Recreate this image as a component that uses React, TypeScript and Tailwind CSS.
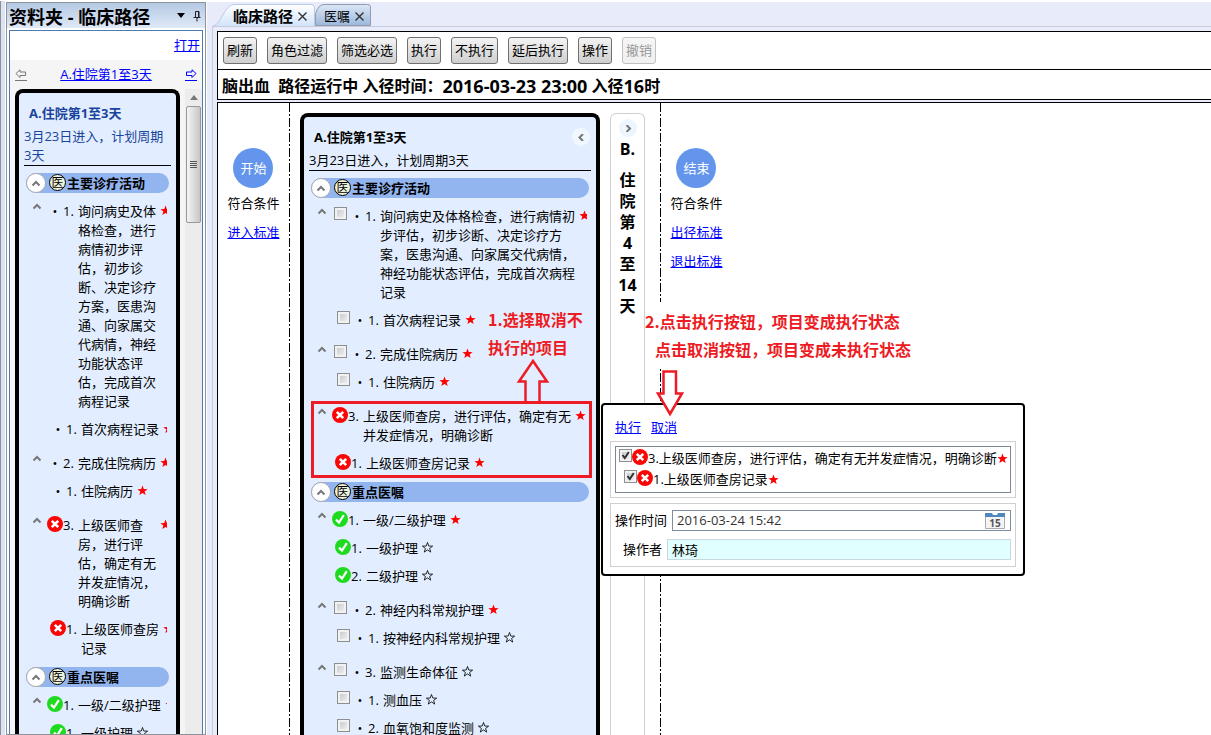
import { useId } from 'react';
import clsx from 'clsx';

type Mark = 'todo' | 'cancelled' | 'done';

interface Task {
  no: number;
  text: string;
  mark: Mark;
  required: boolean;
  oneLine?: boolean;
  children?: Task[];
}

const sections: { title: string; tasks: Task[] }[] = [
  {
    title: '主要诊疗活动',
    tasks: [
      {
        no: 1, mark: 'todo', required: true,
        text: '询问病史及体格检查，进行病情初步评估，初步诊断、决定诊疗方案，医患沟通、向家属交代病情，神经功能状态评估，完成首次病程记录',
        children: [{ no: 1, text: '首次病程记录', mark: 'todo', required: true }],
      },
      {
        no: 2, text: '完成住院病历', mark: 'todo', required: true,
        children: [{ no: 1, text: '住院病历', mark: 'todo', required: true }],
      },
      {
        no: 3, text: '上级医师查房，进行评估，确定有无并发症情况，明确诊断', mark: 'cancelled', required: true,
        children: [{ no: 1, text: '上级医师查房记录', mark: 'cancelled', required: true }],
      },
    ],
  },
  {
    title: '重点医嘱',
    tasks: [
      {
        no: 1, text: '一级/二级护理', mark: 'done', required: true, oneLine: true,
        children: [
          { no: 1, text: '一级护理', mark: 'done', required: false },
          { no: 2, text: '二级护理', mark: 'done', required: false },
        ],
      },
      {
        no: 2, text: '神经内科常规护理', mark: 'todo', required: true,
        children: [{ no: 1, text: '按神经内科常规护理', mark: 'todo', required: false }],
      },
      {
        no: 3, text: '监测生命体征', mark: 'todo', required: false,
        children: [
          { no: 1, text: '测血压', mark: 'todo', required: false },
          { no: 2, text: '血氧饱和度监测', mark: 'todo', required: false },
        ],
      },
    ],
  },
];

const toolbar = ['刷新', '角色过滤', '筛选必选', '执行', '不执行', '延后执行', '操作', '撤销'];

const STAR = 'M6 0.5 7.4 4.4 11.6 4.5 8.3 7 9.5 11 6 8.6 2.5 11 3.7 7 0.4 4.5 4.6 4.4Z';

function Star({ filled }: { filled: boolean }) {
  return (
    <svg viewBox="0 0 12 12" className="h-[11px] w-[11px] shrink-0">
      <path d={STAR} fill={filled ? '#ff0000' : 'none'} stroke={filled ? 'none' : '#000'} strokeWidth="0.9" />
    </svg>
  );
}

function Chevron({ className, d = 'M1.500 5.500 5 2 8.500 5.500' }: { className?: string; d?: string }) {
  return (
    <svg viewBox="0 0 10 7" className={clsx('h-[7px] w-[10px] shrink-0', className)}>
      <path d={d} fill="none" stroke="#777" strokeWidth="2" />
    </svg>
  );
}

function StatusIcon({ mark }: { mark: Mark }) {
  return (
    <svg viewBox="0 0 16 16" className="h-4 w-4 shrink-0">
      <circle cx="8" cy="8" r="8" fill={mark === 'done' ? '#1fdb1f' : '#fb0505'} />
      {mark === 'done'
        ? <path d="M4 8.6 7 11.6 11.8 4.2" fill="none" stroke="#fff" strokeWidth="2.2" />
        : <path d="M4.8 4.8 11.2 11.2 M11.2 4.8 4.8 11.2" fill="none" stroke="#fff" strokeWidth="2.6" />}
    </svg>
  );
}

function CheckBox({ id, checked = false }: { id: string; checked?: boolean }) {
  return (
    <span className="relative h-[13px] w-[13px] shrink-0">
      <input
        id={id}
        type="checkbox"
        defaultChecked={checked}
        className="peer block h-[13px] w-[13px] appearance-none border border-[#8e8f8f] bg-linear-to-br from-[#bfc4ca] to-[#f6f6f6] shadow-[inset_0_0_0_2px_#f2f2f2]"
      />
      <svg viewBox="0 0 13 13" className="pointer-events-none absolute inset-0 hidden peer-checked:block">
        <path d="M3.5 6 5.8 9 9.8 3" fill="none" stroke="#333" strokeWidth="2" />
      </svg>
    </span>
  );
}

function TaskRow({ task, compact, child }: { task: Task; compact: boolean; child?: boolean }) {
  const id = useId();
  const boxed = task.mark === 'todo' && !compact;
  const width = compact ? 'max-w-[78px]' : boxed ? 'max-w-[195px]' : 'max-w-[208px]';
  return (
    <li className="flex items-start">
      <span className={clsx('flex shrink-0', child ? 'w-[18px]' : 'w-[15px]')}>
        {!child && <Chevron className="mt-px" />}
      </span>
      {boxed && (
        <span className="flex w-[33px] shrink-0 pl-[2px]">
          <CheckBox id={id} />
          <span className="w-[18px] pl-[2px] text-center">•</span>
        </span>
      )}
      {!boxed && task.mark === 'todo' && <span className="w-4 shrink-0 text-center">•</span>}
      {task.mark !== 'todo' && <StatusIcon mark={task.mark} />}
      <span className="w-[15px] shrink-0">{task.no}.</span>
      <label htmlFor={boxed ? id : undefined} className={clsx('shrink-0', task.oneLine ? 'whitespace-nowrap' : width)}>
        {task.text}
      </label>
      <span className="ml-1 mt-[3px] flex shrink-0"><Star filled={task.required} /></span>
    </li>
  );
}

function PhaseCard({ compact = false }: { compact?: boolean }) {
  return (
    <section
      className={clsx(
        'shrink-0 rounded-t-lg border-4 border-b-0 border-black bg-[#e2eeff] px-[5px] pt-[10px]',
        compact ? 'w-[165px]' : 'w-[300px]',
      )}
    >
      <div className="flex h-5 items-center justify-between pl-[5px]">
        <h2 className={clsx('font-bold', compact && 'text-[#1a439c]')}>A.住院第1至3天</h2>
        {!compact && (
          <button aria-label="收起" className="mr-[1px] flex h-[18px] w-[18px] items-center justify-center rounded-full bg-[#f0f7ff]">
            <Chevron d="M7 0 3.5 3.5 7 7" />
          </button>
        )}
      </div>
      <p className={clsx('mt-1 border-b border-black', compact && 'pr-[5px] text-[#1a439c]')}>3月23日进入，计划周期3天</p>
      {sections.map(section => (
        <div key={section.title}>
          <div className="mx-[2px] mt-[7px] mb-[9px] flex h-5 items-center rounded-full bg-[#92b4ef]">
            <button aria-label="折叠" className="flex h-5 w-5 items-center justify-center rounded-full border border-[#aaa] bg-white">
              <Chevron />
            </button>
            <span className="mb-[2px] ml-[3px] flex h-[17px] w-[17px] items-center justify-center rounded-full border border-black bg-[#eef3dc] text-[12px]">医</span>
            <h3 className="ml-px font-bold">{section.title}</h3>
          </div>
          <ul className="mr-1 mb-[9px] flex flex-col gap-[15px] overflow-hidden pl-[8px]">
            {section.tasks.map(task => (
              <li key={task.no}>
                <ul className="flex flex-col gap-[9px]">
                  <TaskRow task={task} compact={compact} />
                  {task.children?.map(c => <TaskRow key={c.no} task={c} compact={compact} child />)}
                </ul>
              </li>
            ))}
          </ul>
        </div>
      ))}
    </section>
  );
}

function Sidebar() {
  return (
    <aside className="flex w-[207px] shrink-0 flex-col border-l border-[#8a9099] bg-linear-to-r from-[#dde3f2] from-[4px] to-white to-[4px] pt-px pr-px pl-[5px]">
      <div className="flex min-h-0 flex-1 flex-col border border-[#8d929b] bg-white px-[2px]">
        <header className="-mx-[2px] flex h-[25px] shrink-0 items-center bg-linear-to-b from-[#b5c9e4] to-[#dfe9f7] pt-[3px] pl-[2px] pr-1">
          <h1 className="flex-1 text-[18px] font-bold whitespace-nowrap">资料夹 - 临床路径</h1>
          <svg viewBox="0 0 8 5" className="mr-2 mb-[3px] h-[5px] w-2"><path d="M0 0h8L4 5z" /></svg>
          <svg viewBox="0 0 8 12" className="mb-[3px] h-3 w-2" fill="none" stroke="#222">
            <path d="M2.5 7.5v-6h3.5v6M5.5 1v6.500M.5 7.500h7M4 7.500v4" />
          </svg>
        </header>
        <div className="mt-[2px] flex min-h-0 flex-1 flex-col border border-b-0 border-[#4c7bb5] bg-[#f5f5f5]">
          <div className="flex h-[29px] shrink-0 items-center justify-end bg-white pr-[2px]">
            <a href="#open" className="text-[#0000ff] underline">打开</a>
          </div>
          <nav className="flex h-[29px] shrink-0 items-center justify-between px-[5px]">
            <a href="#prev" aria-label="上一阶段" className="border-b border-[#777] pb-[2px]">
              <svg viewBox="0 0 12 9" className="h-[9px] w-3" fill="none" stroke="#777"><path d="M1 4.500 5 .8V3h5.500v3.500H5v2z" /></svg>
            </a>
            <a href="#phase" className="text-[#0000ff] underline">A.住院第1至3天</a>
            <a href="#next" aria-label="下一阶段" className="border-b border-[#0000ff] pb-[2px]">
              <svg viewBox="0 0 12 9" className="h-[9px] w-3" fill="none" stroke="#0000ff"><path d="M11 4.500 7 .8V3H1.500v3.500H7v2z" /></svg>
            </a>
          </nav>
          <div className="flex min-h-0 flex-1 justify-between overflow-hidden pl-[5px]">
            <PhaseCard compact />
            <div className="flex w-[17px] flex-col bg-[#ececec]">
              <div className="flex h-[17px] items-center justify-center">
                <svg viewBox="0 0 8 5" className="h-[5px] w-2"><path d="M0 5h8L4 0z" fill="#777" /></svg>
              </div>
              <div className="mx-px flex h-[117px] flex-col items-center justify-center gap-px rounded-xs border border-[#979797] bg-linear-to-r from-[#f5f5f5] to-[#c6c6c6]">
                {[0, 1, 2, 3].map(i => <span key={i} className="h-px w-[7px] bg-[#555]" />)}
              </div>
            </div>
          </div>
        </div>
      </div>
    </aside>
  );
}

function Tabs() {
  return (
    <div role="tablist" className="flex h-[25px] shrink-0 items-end border-b border-[#c9cbdc]">
      <button role="tab" aria-selected="true" className="relative flex h-[22px] w-[103px] items-center pt-[2px] pl-[21px]">
        <svg viewBox="0 0 103 22" className="absolute inset-0 h-[22px] w-[103px]">
          <defs>
            <linearGradient id="tabOn" x1="0" y1="0" x2="0" y2="1"><stop stopColor="#fff" /><stop offset="1" stopColor="#d2e4fa" /></linearGradient>
          </defs>
          <path d="M1 22C9 21 12 1 22 .5H99Q102.500 .5 102.500 4V22" fill="url(#tabOn)" stroke="#b9cbe4" />
        </svg>
        <span className="relative text-[15px] font-bold">临床路径</span>
        <Close />
      </button>
      <button role="tab" aria-selected="false" className="relative flex h-[22px] w-[56px] items-center pt-[2px] pl-[9px]">
        <svg viewBox="0 0 56 22" className="absolute inset-0 h-[22px] w-[56px]">
          <defs>
            <linearGradient id="tabOff" x1="0" y1="0" x2="0" y2="1"><stop stopColor="#dbe7f6" /><stop offset="1" stopColor="#9bb8da" /></linearGradient>
          </defs>
          <path d="M.5 21.500V10Q3 .5 9 .5H52.500Q55.500 .5 55.500 3V21.500Z" fill="url(#tabOff)" stroke="#8f9cb0" />
        </svg>
        <span className="relative">医嘱</span>
        <Close />
      </button>
    </div>
  );
}

function Close() {
  return (
    <svg viewBox="0 0 9 9" className="relative ml-[5px] h-[9px] w-[9px]"><path d="M.5 .5l8 8M8.500 .5l-8 8" stroke="#333" strokeWidth="1.400" /></svg>
  );
}

function Gate({ label, links }: { label: string; links: string[] }) {
  return (
    <div className="flex w-[71px] shrink-0 flex-col items-center gap-[9px] pt-[45px] leading-5">
      <div className="flex flex-col items-center gap-[5px]">
        <span className="flex h-10 w-10 items-center justify-center rounded-full bg-[#6495ed] text-white">{label}</span>
        <span>符合条件</span>
      </div>
      {links.map(l => <a key={l} href="#criteria" className="text-[#0000ff] underline">{l}</a>)}
    </div>
  );
}

function DashLine() {
  return (
    <div className="w-px shrink-0 bg-[repeating-linear-gradient(to_bottom,#000_0_9px,transparent_9px_11px,#000_11px_13px,transparent_13px_15px)]" />
  );
}

function NextPhase() {
  return (
    <section className="ml-[10px] mt-[10px] flex w-[35px] shrink-0 flex-col items-center rounded-t-md border border-b-0 border-[#d0d0d0] pt-[5px] text-[16px] leading-[21px] font-bold">
      <button aria-label="展开" className="flex h-[18px] w-[18px] items-center justify-center rounded-full bg-[#edf5ff]">
        <Chevron d="M3.500 0 7 3.500 3.500 7" />
      </button>
      <span className="mt-[2px] mb-[10px]">B.</span>
      {['住', '院', '第', '4', '至', '14', '天'].map(c => <span key={c}>{c}</span>)}
    </section>
  );
}

function ExecutePopup() {
  return (
    <div className="absolute top-[300px] left-[383px] flex w-[424px] flex-col gap-[5px] rounded border-2 border-black bg-white px-[7px] pt-[12px] pb-[7px]">
      <div className="flex gap-[10px] px-[5px] leading-5">
        <a href="#run" className="text-[#0000ff] underline">执行</a>
        <a href="#cancel" className="text-[#0000ff] underline">取消</a>
      </div>
      <div className="-mt-px border border-[#d0d0d0] p-1">
        <ul className="flex flex-col gap-[2px] border border-[#7d8796] pt-[2px] pb-[3px] pl-[3px] whitespace-nowrap">
          <li className="flex items-start">
            <CheckBox id="pop-3" checked />
            <span className="flex"><StatusIcon mark="cancelled" /></span>
            <label htmlFor="pop-3">3.上级医师查房，进行评估，确定有无并发症情况，明确诊断</label>
            <span className="mt-1 flex"><Star filled /></span>
          </li>
          <li className="flex items-start pl-[5px]">
            <CheckBox id="pop-1" checked />
            <span className="flex"><StatusIcon mark="cancelled" /></span>
            <label htmlFor="pop-1">1.上级医师查房记录</label>
            <span className="mt-1 flex"><Star filled /></span>
          </li>
        </ul>
      </div>
      <div className="flex flex-col gap-2 border border-[#d0d0d0] px-1 py-[6px]">
        <div className="flex items-center">
          <label htmlFor="op-time" className="w-[57px] shrink-0">操作时间</label>
          <div className="flex h-[21px] min-w-0 flex-1 items-center border border-[#7d8ea3] pr-[5px]">
            <input id="op-time" defaultValue="2016-03-24 15:42" className="min-w-0 flex-1 pl-1 text-[13px] text-[#333] outline-none" />
            <svg viewBox="0 0 20 16" className="h-4 w-5">
              <path d="M.5 3h19v12.500H.5z" fill="#f4f4f6" stroke="#a8abb0" />
              <path d="M0 0h7l1 2h4l1-2h7v4H0z" fill="#4d87bd" />
              <text x="10" y="14" textAnchor="middle" fontSize="10" fontWeight="700" fill="#555">15</text>
            </svg>
          </div>
        </div>
        <div className="flex items-center pl-2">
          <label htmlFor="operator" className="w-[44px] shrink-0">操作者</label>
          <input id="operator" defaultValue="林琦" className="h-[21px] min-w-0 flex-1 border border-[#c9d9e0] bg-[#e0ffff] pl-1 outline-none" />
        </div>
      </div>
    </div>
  );
}

function Notes() {
  return (
    <div className="text-[16px] leading-7 font-bold whitespace-nowrap text-[#ed1c24]">
      <div className="absolute top-[202px] left-[270px] font-[Noto_Sans_CJK_SC,sans-serif]">1.选择取消不<br />执行的项目</div>
      <div className="absolute top-[298px] left-[93px] h-[77px] w-[281px] border-3 border-[#ed1c24]" />
      <svg viewBox="0 0 34 46" className="absolute top-[255px] left-[298px] h-[46px] w-[34px]">
        <path d="M9.500 45V23.500H3L17 3 31 23.500H23.500V45" fill="none" stroke="#ed1c24" strokeWidth="2.500" />
      </svg>
      <div className="absolute top-[199px] left-[427px] bg-white pt-[5px] pb-[6px] font-[Noto_Sans_CJK_SC,sans-serif]">
        2.点击执行按钮，项目变成执行状态
        <br />
        <span className="pl-[10px]">点击取消按钮，项目变成未执行状态</span>
      </div>
      <svg viewBox="0 0 30 50" className="absolute top-[265px] left-[437px] h-[50px] w-[30px]">
        <path d="M8.500 25.500V3.500H21V25.500H27L15 46 3 25.500Z" fill="#fff" stroke="#ed1c24" strokeWidth="2.500" />
      </svg>
    </div>
  );
}

export default function App() {
  return (
    <div className="flex h-screen overflow-hidden bg-white pt-[1px] text-[13px] leading-[19px] text-black font-[Open_Sans,Noto_Sans_CJK_SC,sans-serif]">
      <Sidebar />
      <div className="mt-px flex min-w-0 flex-1 flex-col bg-[#e8ebfa] pl-[5px]">
        <Tabs />
        <main className="flex min-h-0 flex-1 flex-col border-l border-[#c9cbdc] pt-1 pl-1">
          <div className="flex shrink-0 gap-[10px] border border-r-0 border-black bg-white px-[5px] py-[5px]">
            {toolbar.map(name => (
              <button
                key={name}
                disabled={name === '撤销'}
                className="h-[27px] rounded-[3px] border border-[#707070] bg-linear-to-b from-[#f3f3f3] to-[#cfcfcf] px-[3px] whitespace-nowrap disabled:border-[#c0c0c0] disabled:from-[#f6f6f6] disabled:to-[#f0f0f0] disabled:text-[#9a9a9a]"
              >
                {name}
              </button>
            ))}
          </div>
          <div className="flex h-[30px] shrink-0 items-center border-b border-l border-black bg-white pt-[3px] pl-1 text-[16px] font-bold whitespace-pre">
            {'脑出血  路径运行中 入径时间：'}<span className="text-[18px]">2016-03-23 23:00</span>{' 入径'}<span className="text-[18px]">16</span>时
          </div>
          <div className="relative mt-[2px] flex min-h-0 flex-1 overflow-hidden border-t border-l border-black bg-white">
            <Gate label="开始" links={['进入标准']} />
            <DashLine />
            <div className="ml-[10px] mt-[10px] flex"><PhaseCard /></div>
            <NextPhase />
            <div className="w-[15px] shrink-0" />
            <DashLine />
            <Gate label="结束" links={['出径标准', '退出标准']} />
            <ExecutePopup />
            <Notes />
          </div>
        </main>
      </div>
    </div>
  );
}
